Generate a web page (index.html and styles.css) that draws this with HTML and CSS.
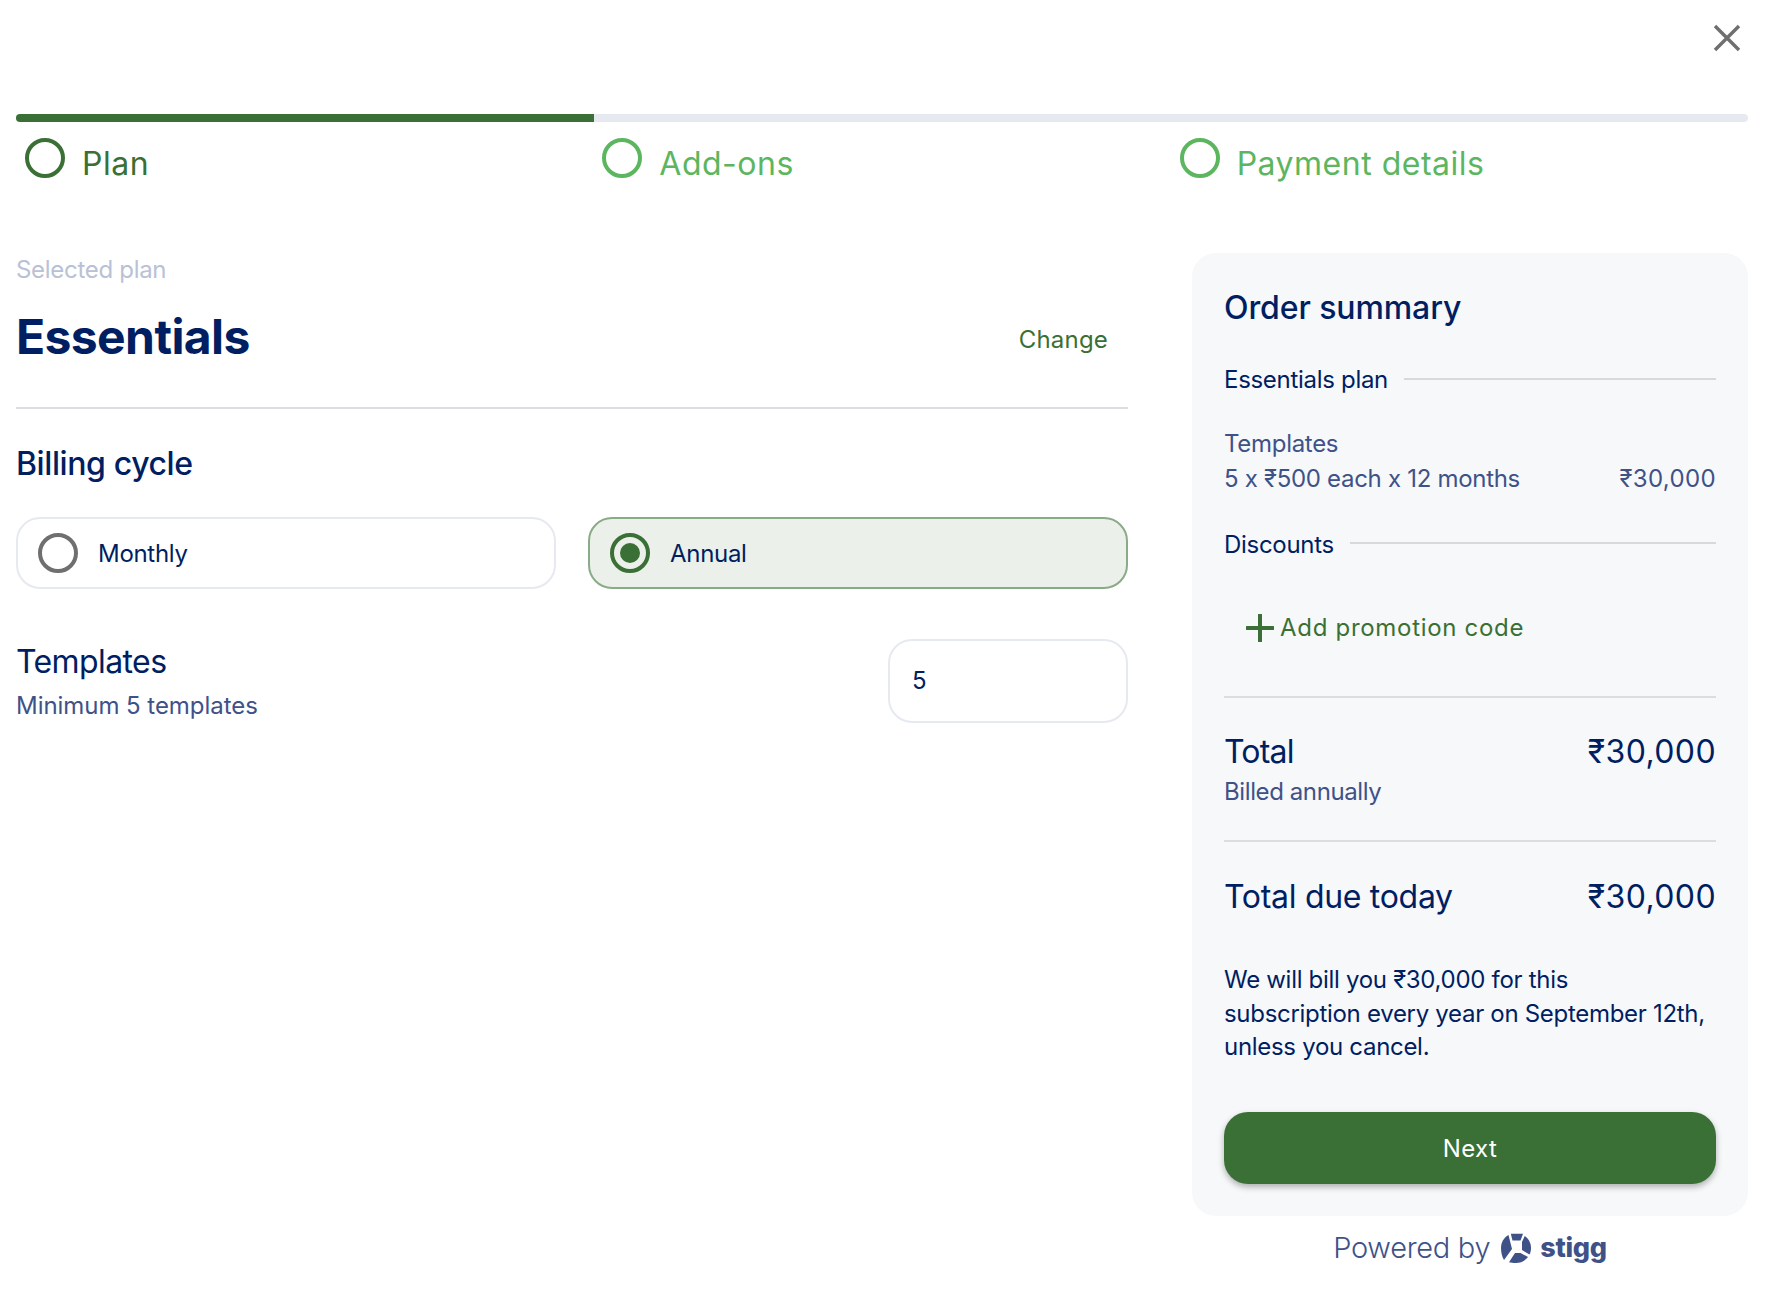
FILE: index.html
```html
<!DOCTYPE html>
<html lang="en">
<head>
    <meta charset="UTF-8">
    <title>Checkout</title>
    <link rel="stylesheet" href="styles.css">
</head>
<body>
    <!-- Close button -->
    <div class="top-bar">
        <svg class="close-icon" width="28" height="28" viewBox="0 0 28 28"><path d="M2 2 L26 26 M26 2 L2 26" /></svg>
    </div>

    <!-- Progress -->
    <div class="progress"><div class="progress-fill"></div></div>
    <div class="steps">
        <div class="step step-active"><span class="step-circle"></span><span class="step-label">Plan</span></div>
        <div class="step"><span class="step-circle"></span><span class="step-label">Add-ons</span></div>
        <div class="step"><span class="step-circle"></span><span class="step-label">Payment details</span></div>
    </div>

    <div class="main">
        <!-- Left column -->
        <div class="left">
            <div class="muted">Selected plan</div>
            <div class="plan-row">
                <h1 class="plan-name">Essentials</h1>
                <span class="change">Change</span>
            </div>
            <div class="divider"></div>
            <h2 class="billing-title">Billing cycle</h2>
            <div class="options">
                <div class="option"><span class="radio"></span><span class="option-label">Monthly</span></div>
                <div class="option option-selected"><span class="radio radio-on"></span><span class="option-label">Annual</span></div>
            </div>
            <div class="templates-row">
                <div class="templates-text">
                    <div class="templates-title">Templates</div>
                    <div class="secondary templates-min">Minimum 5 templates</div>
                </div>
                <div class="qty-input">5</div>
            </div>
        </div>

        <!-- Order summary -->
        <div class="right">
            <div class="card">
                <h2 class="card-title">Order summary</h2>
                <div class="line-title title-plan"><span>Essentials plan</span><i></i></div>
                <div class="item">
                    <div class="secondary">Templates</div>
                    <div class="item-row secondary"><span>5 x ₹500 each x 12 months</span><span class="price-small">₹30,000</span></div>
                </div>
                <div class="line-title title-discounts"><span>Discounts</span><i></i></div>
                <div class="promo">
                    <svg width="28" height="28" viewBox="0 0 28 28"><path d="M14 1 V27 M1 14 H27" /></svg>
                    <span>Add promotion code</span>
                </div>
                <div class="divider promo-divider"></div>
                <div class="total-row total-first"><span>Total</span><span class="price">₹30,000</span></div>
                <div class="secondary billed">Billed annually</div>
                <div class="divider total-divider"></div>
                <div class="total-row total-due"><span>Total due today</span><span class="price">₹30,000</span></div>
                <p class="note">We will bill you ₹30,000 for this subscription every year on September 12th, unless you cancel.</p>
                <button class="next">Next</button>
            </div>
            <div class="powered">
                <span>Powered by</span>
                <svg class="logo" width="30" height="30" viewBox="0 0 30 30">
                    <path d="M9.800 0.700 L22 0.700 L19.500 7.500 L11.500 7.500 Z" />
                    <path d="M23.700 3 C27.500 5.500 30 10 30 15 C30 17.500 29.500 19.500 28.500 21.500 L21 17 L21 9 Z" />
                    <path d="M8 29.300 L14 20 L19.500 20 L27 24 C24 28 19 30 15 30 C12 30 10 29.800 8 29.300 Z" />
                    <path d="M7.500 2 L9.500 10 L11 16 L3 27 C1 24 0 19.500 0 15 C0 9 3 4.500 7.500 2 Z" />
                </svg>
                <span class="stigg">stigg</span>
            </div>
        </div>
    </div>
</body>
</html>
```

FILE: styles.css
```css
* {
    margin: 0;
    padding: 0;
    box-sizing: border-box;
}

body {
    padding: 0 22px 0 16px;
    background: #fff;
    color: #001e62;
    font-family: Inter, "Noto Sans", sans-serif;
    font-size: 24px;
    line-height: 32px;
    letter-spacing: -0.3px;
}

/* Top */
.top-bar {
    display: flex;
    justify-content: flex-end;
    height: 114px;
    padding-top: 24px;
    margin-right: -15px;
}

.close-icon path {
    fill: none;
    stroke: #6f6f6f;
    stroke-width: 3.4;
}

.close-icon {
    margin-right: 22px;
}

.progress {
    height: 8px;
    background: #e6e9f0;
    border-radius: 4px;
    overflow: hidden;
}

.progress-fill {
    width: 578px;
    height: 100%;
    background: #3a7035;
}

.steps {
    display: grid;
    grid-template-columns: repeat(3, 1fr);
    padding-top: 16px;
    height: 131px;
}

.step {
    display: flex;
    align-items: flex-start;
    gap: 17px;
    padding-left: 9px;
    color: #5cb65f;
    font-size: 32px;
    line-height: 40px;
    letter-spacing: 0.5px;
}

.step-label {
    margin-top: 6px;
}

.step-circle {
    width: 40px;
    height: 40px;
    border: 4px solid #5cb65f;
    border-radius: 50%;
}

.step-active {
    color: #3a7035;
}

.step-active .step-circle {
    border-color: #3a7035;
}

.main {
    display: grid;
    grid-template-columns: 1112px 556px;
    gap: 64px;
}

/* Left column */
.left {
    padding-top: 1px;
}

.muted {
    color: #b9c1d6;
}

.plan-row {
    display: flex;
    justify-content: space-between;
    align-items: center;
    margin-top: 19px;
    padding-right: 20px;
}

.plan-name {
    font-size: 48px;
    line-height: 64px;
    font-weight: 700;
    letter-spacing: -0.6px;
}

.change {
    color: #3a7035;
    letter-spacing: 0.2px;
    margin-top: 6px;
}

.divider {
    height: 2px;
    background: #dcdde0;
}

.left .divider {
    margin-top: 38px;
}

.billing-title {
    margin-top: 35px;
    font-size: 32px;
    line-height: 40px;
    font-weight: 500;
    letter-spacing: -0.4px;
}

.options {
    display: grid;
    grid-template-columns: 1fr 1fr;
    gap: 32px;
    margin-top: 33px;
}

.option {
    display: flex;
    align-items: center;
    gap: 20px;
    height: 72px;
    padding-left: 20px;
    border: 2px solid #e6e9f0;
    border-radius: 24px;
}

.option-label {
    padding-top: 2px;
}

.option-selected {
    background: #ebf0ea;
    border-color: #8aab87;
}

.radio {
    position: relative;
    width: 40px;
    height: 40px;
    border: 4px solid #6f6f6f;
    border-radius: 50%;
}

.radio-on {
    border-color: #3a7035;
}

.radio-on::after {
    content: "";
    position: absolute;
    top: 6px;
    left: 6px;
    width: 20px;
    height: 20px;
    background: #3a7035;
    border-radius: 50%;
}

.templates-row {
    display: flex;
    justify-content: space-between;
    align-items: center;
    margin-top: 50px;
}

.templates-text {
    display: flex;
    flex-direction: column;
    gap: 8px;
    padding-top: 2px;
}

.templates-title {
    font-size: 32px;
    line-height: 40px;
    letter-spacing: -0.6px;
}

.templates-min {
    letter-spacing: -0.05px;
}

.secondary {
    color: #3e5288;
}

.qty-input {
    width: 240px;
    height: 84px;
    padding: 24px 0 0 22px;
    border: 2px solid #e6e9f0;
    border-radius: 24px;
}

/* Order summary */
.card {
    padding: 35px 32px 32px;
    background: #f7f8fa;
    border-radius: 24px;
}

.card-title {
    font-size: 32px;
    line-height: 40px;
    font-weight: 500;
    letter-spacing: -0.1px;
}

.line-title {
    display: flex;
    align-items: center;
    gap: 16px;
}

.line-title span {
    padding-top: 2px;
}

.line-title i {
    flex: 1;
    height: 2px;
    background: #d8d9dc;
}

.title-plan {
    margin-top: 34px;
}

.item {
    margin-top: 31px;
    line-height: 34px;
}

.item-row {
    display: flex;
    justify-content: space-between;
    margin-top: 1px;
}

.price-small {
    letter-spacing: 0.35px;
}

.title-discounts {
    margin-top: 31px;
}

.title-discounts i {
    margin-top: -2px;
}

.promo {
    display: flex;
    align-items: center;
    gap: 6px;
    height: 40px;
    margin-top: 47px;
    padding-left: 22px;
    color: #3a7035;
    letter-spacing: 0.7px;
}

.promo path {
    fill: none;
    stroke: #3a7035;
    stroke-width: 4;
    stroke-linecap: round;
}

.promo-divider {
    margin-top: 48px;
}

.total-row {
    display: flex;
    justify-content: space-between;
    font-size: 32px;
    line-height: 40px;
    letter-spacing: -0.3px;
}

.total-first span:first-child {
    letter-spacing: -0.8px;
}

.price {
    letter-spacing: 0.4px;
}

.total-first {
    margin-top: 34px;
}

.billed {
    margin-top: 4px;
    letter-spacing: -0.4px;
}

.total-divider {
    margin-top: 32px;
}

.total-due {
    margin-top: 35px;
}

.note {
    max-width: 484px;
    margin-top: 46px;
    line-height: 33.500px;
}

.next {
    display: block;
    width: 100%;
    height: 72px;
    margin-top: 48px;
    padding-top: 2px;
    background: #3a7035;
    color: #fff;
    border: none;
    border-radius: 24px;
    font: inherit;
    letter-spacing: 0.4px;
    box-shadow: 0 3px 6px rgba(0, 0, 0, 0.3);
}

/* Footer */
.powered {
    display: flex;
    justify-content: center;
    align-items: center;
    gap: 11px;
    margin-top: 15px;
    color: #3e5288;
    font-size: 29px;
    line-height: 34px;
    font-weight: 300;
}

.logo path {
    fill: #3e5288;
}

.stigg {
    font-size: 27px;
    font-weight: 800;
    margin-left: -2px;
}
```
